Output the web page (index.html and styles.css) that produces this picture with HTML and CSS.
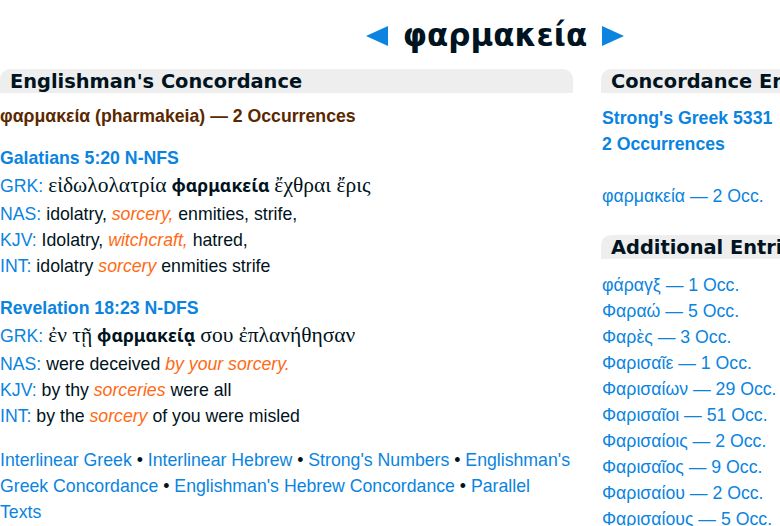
FILE: index.html
```html
<!DOCTYPE html>
<html>
<head>
<meta charset="utf-8">
<link rel="stylesheet" href="styles.css">
</head>
<body>
<div class="page">
  <div class="top">
    <a class="arrow" href="#"><svg width="22" height="20" viewBox="0 0 22 20"><polygon points="0,10 22,0 22,20" fill="#0a84e0"/></svg></a>
    <span class="title">φαρμακεία</span>
    <a class="arrow" href="#"><svg width="22" height="20" viewBox="0 0 22 20"><polygon points="22,10 0,0 0,20" fill="#0a84e0"/></svg></a>
  </div>
  <div class="cols">
    <div class="left">
      <div class="bar">Englishman's Concordance</div>
      <div class="occ">φαρμακεία (pharmakeia) — 2 Occurrences</div>

      <div class="verse">
        <div class="ref">Galatians 5:20 N-NFS</div>
        <div class="grk"><span class="lab">GRK:</span> <span class="gk">εἰδωλολατρία</span> <b class="gb">φαρμακεία</b> <span class="gk">ἔχθραι ἔρις</span></div>
        <div class="ln"><span class="lab">NAS:</span> idolatry, <i class="hl">sorcery,</i> enmities, strife,</div>
        <div class="ln"><span class="lab">KJV:</span> Idolatry, <i class="hl">witchcraft,</i> hatred,</div>
        <div class="ln"><span class="lab">INT:</span> idolatry <i class="hl">sorcery</i> enmities strife</div>
      </div>

      <div class="verse">
        <div class="ref">Revelation 18:23 N-DFS</div>
        <div class="grk"><span class="lab">GRK:</span> <span class="gk">ἐν τῇ</span> <b class="gb">φαρμακείᾳ</b> <span class="gk">σου ἐπλανήθησαν</span></div>
        <div class="ln"><span class="lab">NAS:</span> were deceived <i class="hl">by your sorcery.</i></div>
        <div class="ln"><span class="lab">KJV:</span> by thy <i class="hl">sorceries</i> were all</div>
        <div class="ln"><span class="lab">INT:</span> by the <i class="hl">sorcery</i> of you were misled</div>
      </div>

      <div class="links"><a href="#">Interlinear Greek</a> • <a href="#">Interlinear Hebrew</a> • <a href="#">Strong's Numbers</a> • <a href="#">Englishman's Greek Concordance</a> • <a href="#">Englishman's Hebrew Concordance</a> • <a href="#">Parallel Texts</a></div>
    </div>
    <div class="right">
      <div class="bar">Concordance Entries</div>
      <div class="strong"><a href="#">Strong's Greek 5331</a><br><a href="#">2 Occurrences</a></div>
      <div class="entry first"><a href="#">φαρμακεία — 2 Occ.</a></div>

      <div class="bar bar2">Additional Entries</div>
      <div class="entries">
        <div class="entry"><a href="#">φάραγξ — 1 Occ.</a></div>
        <div class="entry"><a href="#">Φαραώ — 5 Occ.</a></div>
        <div class="entry"><a href="#">Φαρὲς — 3 Occ.</a></div>
        <div class="entry"><a href="#">Φαρισαῖε — 1 Occ.</a></div>
        <div class="entry"><a href="#">Φαρισαίων — 29 Occ.</a></div>
        <div class="entry"><a href="#">Φαρισαῖοι — 51 Occ.</a></div>
        <div class="entry"><a href="#">Φαρισαίοις — 2 Occ.</a></div>
        <div class="entry"><a href="#">Φαρισαῖος — 9 Occ.</a></div>
        <div class="entry"><a href="#">Φαρισαίου — 2 Occ.</a></div>
        <div class="entry"><a href="#">Φαρισαίους — 5 Occ.</a></div>
      </div>
    </div>
  </div>
</div>
</body>
</html>
```

FILE: styles.css
```css
html, body {
  margin: 0;
  padding: 0;
  background: #fff;
  overflow: hidden;
}
body {
  font-family: "Liberation Sans", Arial, sans-serif;
  font-size: 17.7px;
  color: #001320;
}
a {
  color: #0a84e0;
  text-decoration: none;
}
.page {
  width: 990px;
}
.top {
  display: flex;
  justify-content: center;
  align-items: center;
  gap: 15px;
  height: 69px;
  box-sizing: border-box;
  padding-top: 1px;
}
.arrow {
  display: flex;
  margin-top: 2px;
}
.title {
  font-family: "DejaVu Sans", Verdana, sans-serif;
  font-weight: bold;
  font-size: 31px;
  color: #001320;
  line-height: 40px;
}
.cols {
  display: flex;
  gap: 28px;
}
.left {
  width: 573px;
  flex: none;
}
.right {
  width: 340px;
  flex: none;
}
.bar {
  background: #eeeeee;
  border-radius: 10px 10px 0 0;
  height: 24px;
  line-height: 26px;
  padding-left: 10px;
  font-family: "DejaVu Sans", Verdana, sans-serif;
  font-weight: bold;
  font-size: 19.4px;
  color: #001320;
  white-space: nowrap;
  overflow: hidden;
}
.occ {
  margin-top: 10px;
  font-weight: bold;
  color: #5a2800;
  line-height: 26px;
}
.verse {
  margin-top: 16px;
}
.ref {
  font-weight: bold;
  color: #0a84e0;
  line-height: 26px;
}
.grk {
  line-height: 30px;
  height: 30px;
}
.ln {
  line-height: 26px;
}
.lab {
  color: #0a84e0;
}
.gk {
  font-family: "Liberation Serif", "Times New Roman", serif;
  font-size: 21.5px;
  line-height: 1;
}
.gb {
  font-family: "Noto Sans", "Open Sans", sans-serif;
  font-size: 17.6px;
  font-weight: bold;
  line-height: 1;
}
.hl {
  color: #ff6a13;
}
.links {
  margin-top: 18px;
  line-height: 26px;
  color: #001320;
}
.strong {
  margin-top: 12px;
  font-weight: bold;
  line-height: 26px;
  padding-left: 1px;
}
.entry {
  line-height: 26px;
  padding-left: 1px;
}
.entry.first {
  margin-top: 26px;
}
.bar2 {
  margin-top: 26px;
}
.entries {
  margin-top: 13px;
}
```
